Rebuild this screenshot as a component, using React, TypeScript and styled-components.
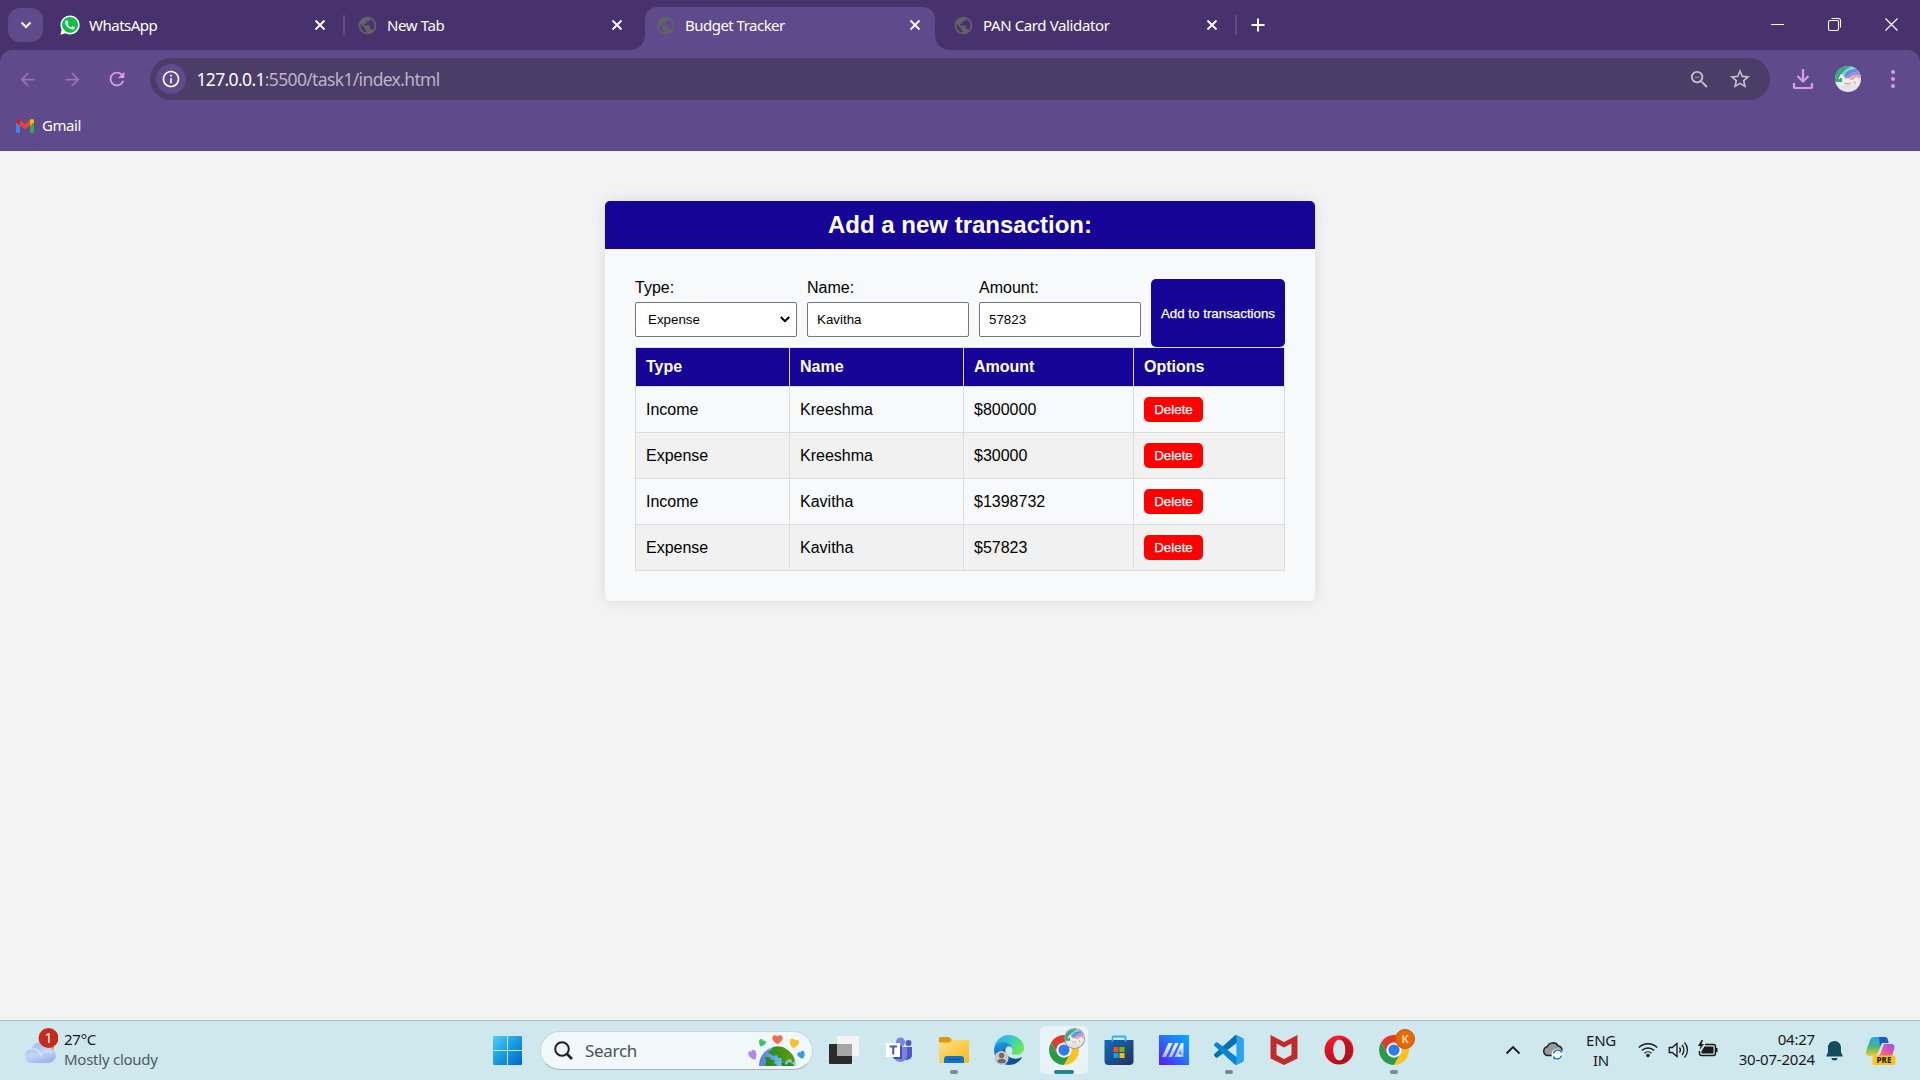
import React from "react";
import styled, { createGlobalStyle } from "styled-components";
import {
  MdPublic,
  MdArrowBack,
  MdArrowForward,
  MdRefresh,
  MdInfoOutline,
  MdZoomOut,
  MdStarOutline,
} from "react-icons/md";
import { FaWhatsapp } from "react-icons/fa";

const UI = '"Noto Sans", "Open Sans", sans-serif';
const ARIAL = '"Liberation Sans", Arial, sans-serif';
const NAVY = "#150496";
const CHROME = "#5f4a8b";
const STRIP = "#47326e";
const PINK = "#d99be8";

const GlobalStyle = createGlobalStyle`
  * { box-sizing: border-box; }
  html, body { margin: 0; padding: 0; overflow: hidden; }
  svg { display: block; flex: none; }
`;

const Screen = styled.div`
  width: 1920px;
  height: 1080px;
  display: flex;
  flex-direction: column;
  overflow: hidden;
  background: #f3f3f3;
  font-family: ${UI};
`;

/* ---------- Browser frame ---------- */

const TabStrip = styled.div`
  height: 50px;
  flex: none;
  display: flex;
  align-items: flex-start;
  background: ${STRIP};
  color: #fff;
`;

const TabSearch = styled.div`
  width: 35px;
  height: 34px;
  margin: 8px 6px 0 8px;
  border-radius: 12px;
  background: ${CHROME};
  display: flex;
  align-items: center;
  justify-content: center;
`;

const Tab = styled.div<{ $active?: boolean; $width: number; $start: number; $end: number }>`
  position: relative;
  width: ${(p) => p.$width}px;
  height: 43px;
  margin-top: 7px;
  padding: 0 ${(p) => p.$end}px 7px ${(p) => p.$start}px;
  display: flex;
  align-items: center;
  border-radius: 12px 12px 0 0;
  background: ${(p) => (p.$active ? CHROME : "transparent")};

  &::before,
  &::after {
    content: "";
    display: ${(p) => (p.$active ? "block" : "none")};
    position: absolute;
    bottom: 0;
    width: 14px;
    height: 14px;
  }
  &::before {
    left: -14px;
    background: radial-gradient(circle at 0 0, transparent 13.5px, ${CHROME} 14px);
  }
  &::after {
    right: -14px;
    background: radial-gradient(circle at 100% 0, transparent 13.5px, ${CHROME} 14px);
  }
`;

const TabTitle = styled.span<{ $track: number }>`
  flex: 1;
  margin-left: 9px;
  font-size: 15px;
  line-height: 20px;
  letter-spacing: ${(p) => p.$track}px;
  white-space: nowrap;
`;

const TabDivider = styled.div`
  width: 2px;
  height: 20px;
  margin-top: 15px;
  background: ${CHROME};
`;

const NewTabButton = styled.div`
  margin: 18px 0 0 14px;
`;

const WindowButtons = styled.div`
  margin-left: auto;
  padding: 17px 21px 0 0;
  display: flex;
  gap: 42px;
`;

const ToolbarBack = styled.div`
  flex: none;
  background: ${STRIP};
`;

const Toolbar = styled.div`
  height: 58px;
  padding: 8px 16px 8px 17px;
  display: flex;
  align-items: flex-start;
  border-radius: 12px 12px 0 0;
  background: ${CHROME};
`;

const NavIcons = styled.div`
  width: 133px;
  height: 42px;
  display: flex;
  align-items: center;
  gap: 23.5px;
  color: #9a70b8;
`;

const Omnibox = styled.div`
  width: 1620px;
  height: 42px;
  padding: 0 18px 0 6px;
  display: flex;
  align-items: center;
  border-radius: 21px;
  background: #4b3d68;
  color: #c5bfca;
`;

const SiteInfo = styled.div`
  width: 30px;
  height: 30px;
  border-radius: 50%;
  background: ${CHROME};
  color: #fff;
  display: flex;
  align-items: center;
  justify-content: center;
`;

const Url = styled.span`
  flex: 1;
  margin-left: 10.5px;
  font-size: 17.5px;
  line-height: 24px;
  letter-spacing: -0.65px;
  color: #bbb4c6;
  b {
    font-weight: 400;
    color: #fff;
  }
`;

const OmniActions = styled.div`
  display: flex;
  align-items: center;
  gap: 17px;
`;

const ToolbarActions = styled.div`
  height: 42px;
  margin-left: auto;
  display: flex;
  align-items: center;
  gap: 21px;
`;

const Bookmarks = styled.div`
  height: 43px;
  flex: none;
  padding: 7px 16px 0;
  display: flex;
  align-items: flex-start;
  gap: 8px;
  background: ${CHROME};
  color: #fff;
  font-size: 15px;
  line-height: 20px;
  letter-spacing: -0.45px;
  svg { margin-top: 4px; }
`;

/* ---------- Page ---------- */

const Page = styled.main`
  flex: 1;
  padding-top: 50px;
  display: flex;
  align-items: flex-start;
  justify-content: center;
  background: #f3f3f3;
  font-family: ${ARIAL};
  color: #000;
`;

const Card = styled.section`
  width: 710px;
  height: 400px;
  border-radius: 5px;
  overflow: hidden;
  background: #f8f9fb;
  box-shadow: 0 0 15px rgba(0, 0, 0, 0.1);
`;

const CardTitle = styled.h1`
  height: 48px;
  margin: 0;
  text-align: center;
  font-size: 24px;
  line-height: 48px;
  font-weight: 700;
  background: ${NAVY};
  color: #fff;
`;

const CardBody = styled.div`
  padding: 30px;
`;

const Form = styled.div`
  height: 68px;
  display: flex;
  align-items: flex-start;
  gap: 10px;
`;

const Field = styled.label`
  width: 162px;
  display: flex;
  flex-direction: column;
  gap: 5px;
  font-size: 16px;
  line-height: 18px;
`;

const Input = styled.input`
  width: 162px;
  height: 35px;
  padding: 0 9px;
  border: 1px solid #767676;
  border-radius: 2px;
  background: #fff;
  color: #000;
  font: 13.333px ${ARIAL};
`;

const SelectBox = styled.div`
  position: relative;
  svg {
    position: absolute;
    right: 7px;
    top: 13px;
    pointer-events: none;
  }
`;

const Select = styled.select`
  display: block;
  appearance: none;
  width: 162px;
  height: 35px;
  padding: 0 11px 0 12px;
  border: 1px solid #767676;
  border-radius: 2px;
  background: #fff;
  color: #000;
  font: 13.333px ${ARIAL};
`;

const AddButton = styled.button`
  width: 134px;
  height: 68px;
  padding: 0;
  border: 0;
  border-radius: 5px;
  background: ${NAVY};
  color: #fff;
  font: 13.333px ${ARIAL};
  -webkit-text-stroke: 0.25px #fff;
  white-space: nowrap;
`;

const Table = styled.div`
  width: 650px;
  display: grid;
  grid-template-columns: 154px 174px 170px 151px;
  border: solid #ddd;
  border-width: 1px 0 0 1px;
`;

const Cell = styled.div<{ $head?: boolean; $shade?: boolean }>`
  height: ${(p) => (p.$head ? 39 : 46)}px;
  padding: 0 10px;
  display: flex;
  align-items: center;
  border: solid #ddd;
  border-width: 0 1px 1px 0;
  background: ${(p) => (p.$head ? NAVY : p.$shade ? "#f1f1f1" : "transparent")};
  color: ${(p) => (p.$head ? "#fff" : "#000")};
  font-size: 16px;
  font-weight: ${(p) => (p.$head ? 700 : 400)};
`;

const DeleteButton = styled.button`
  width: 59px;
  height: 25px;
  padding: 0;
  border: 0;
  border-radius: 5px;
  background: #f00;
  color: #fff;
  font: 13.333px ${ARIAL};
  -webkit-text-stroke: 0.25px #fff;
`;

/* ---------- Taskbar ---------- */

const Taskbar = styled.footer`
  height: 60px;
  flex: none;
  display: flex;
  border-top: 1px solid #a9b6bf;
  background: #cfe8ee;
  color: #1a1a1a;
  font-size: 15px;
  line-height: 20px;
`;

const Weather = styled.div`
  width: 493px;
  padding: 6px 0 0 24px;
  display: flex;
  gap: 6px;
`;

const WeatherText = styled.div`
  padding-top: 2px;
  display: flex;
  flex-direction: column;
  letter-spacing: -0.25px;
  span:last-child { color: #4d5c60; }
`;

const StartButton = styled.div`
  width: 47px;
  padding-top: 15px;
`;

const SearchPill = styled.div`
  width: 273px;
  height: 39px;
  margin-top: 10px;
  padding: 0 6px 0 13px;
  display: flex;
  align-items: center;
  border-radius: 20px;
  border: 1px solid #c3d8df;
  border-bottom-color: #a5b4bc;
  background: #f0f8fa;
  color: #4b5254;
  font-size: 17px;
  letter-spacing: -0.3px;
  span {
    flex: 1;
    margin-left: 12px;
  }
`;

const Apps = styled.div`
  margin-left: 3.5px;
  display: flex;
`;

const AppSlot = styled.div<{ $active?: boolean; $running?: boolean }>`
  position: relative;
  width: 48px;
  height: 48px;
  margin: 5px 3.5px 0;
  display: flex;
  align-items: center;
  justify-content: center;
  border-radius: 5px;
  background: ${(p) => (p.$active ? "#e7f3f7" : "transparent")};
  &::after {
    content: "";
    display: ${(p) => (p.$active || p.$running ? "block" : "none")};
    position: absolute;
    bottom: 0;
    width: ${(p) => (p.$active ? 20 : 8)}px;
    height: 4px;
    border-radius: 2px;
    background: ${(p) => (p.$active ? "#268392" : "#7b8a8e")};
  }
`;

const Badge = styled.div`
  position: absolute;
  top: 3px;
  left: 25px;
  width: 20px;
  height: 20px;
  border-radius: 50%;
  display: flex;
  align-items: center;
  justify-content: center;
  border: 1px solid #b35a18;
  background: #e96900;
  color: #fbe3cc;
  font-size: 11px;
  font-weight: 600;
`;

const AvatarBadge = styled.div`
  position: absolute;
  top: 3px;
  left: 25px;
  border-radius: 50%;
  box-shadow: 0 0 0 1px #8f9a9e;
`;

const Tray = styled.div`
  width: 421px;
  margin-left: auto;
  display: flex;
  align-items: flex-start;
`;

const TrayItem = styled.div<{ $width: number; $top: number }>`
  width: ${(p) => p.$width}px;
  padding-top: ${(p) => p.$top}px;
  flex: none;
`;

const TrayText = styled(TrayItem)<{ $align: "center" | "right"; $track?: number }>`
  display: flex;
  flex-direction: column;
  text-align: ${(p) => p.$align};
  letter-spacing: ${(p) => p.$track ?? 0}px;
  white-space: nowrap;
`;

/* ---------- Drawings ---------- */

const CloseX = () => (
  <svg width="14" height="14" viewBox="0 0 14 14" fill="none" stroke="#fff" strokeWidth="1.8">
    <path d="M2.5 2.5l9 9M11.5 2.5l-9 9" />
  </svg>
);

const WhatsAppLogo = () => (
  <svg width="20" height="20" viewBox="0 0 20 20">
    <circle cx="10.2" cy="9.8" r="8.8" fill="#0cc143" />
    <path d="M1 19l1.6-6 4 4.4z" fill="#fff" />
    <FaWhatsapp x={-1} y={-1} size={22} color="#fff" />
  </svg>
);

const Avatar = ({ size }: { size: number }) => (
  <svg width={size} height={size} viewBox="0 0 26 26">
    <defs>
      <clipPath id={`round${size}`}>
        <circle cx="13" cy="13" r="13" />
      </clipPath>
    </defs>
    <g clipPath={`url(#round${size})`}>
      <rect width="26" height="26" fill="#e4e3e6" />
      <path d="M0 0h16v5L7 9l-1 7H0z" fill="#36a880" />
      <g fill="none" strokeWidth="3.2">
        <path d="M7 16C6 7 12 3 21 1" stroke="#80d4d8" />
        <path d="M10 13C11 6 17 4 25 4" stroke="#5b8de0" />
        <path d="M13 12c1-4 6-5 14-4" stroke="#a58ae2" />
        <path d="M16 14c2-4 5-4 12-3" stroke="#e7a8b6" />
      </g>
      <path d="M6 8l3 1 2 3 3 2h5l2-3 2 1 1 6-2 2-2-3-2 2-6-1-5 2-3-1 2-3-1-3-2 0z" fill="#f4eee6" />
      <path d="M9 17l4 1 3-1M8 9l3 4M19 15l2 3" stroke="#b6a08e" fill="none" />
      <path d="M6 16v-4" stroke="#36a880" strokeWidth="2" />
    </g>
  </svg>
);

const GmailLogo = () => (
  <svg width="18" height="14" viewBox="0 0 18 14">
    <path d="M0 2v10.8A1.2 1.2 0 001.2 14H4V5.5z" fill="#4285f4" />
    <path d="M18 2v10.8a1.2 1.2 0 01-1.2 1.2H14V5.5z" fill="#34a853" />
    <path d="M14 1.2V6.5l4-3V2C18 .2 16-.7 14.500 .6z" fill="#fbbc04" />
    <path d="M4 6.500V1.200l5 3.800 5-3.800v5.300L9 10.300z" fill="#ea4335" />
    <path d="M0 2v1.500l4 3V1.200L3.500.6C2-.7 0 .2 0 2z" fill="#c5221f" />
  </svg>
);

const ChromeLogo = () => (
  <svg width="30" height="30" viewBox="0 0 48 48">
    <path d="M24 12h20.780A24 24 0 0 0 3.220 12L13.600 30A12 12 0 0 1 24 12z" fill="#e23b2e" />
    <path d="M13.600 30L3.220 12A24 24 0 0 0 24 48L34.400 30A12 12 0 0 1 13.600 30z" fill="#2a9a48" />
    <path d="M34.400 30L24 48A24 24 0 0 0 44.780 12H24A12 12 0 0 1 34.400 30z" fill="#fcc31e" />
    <circle cx="24" cy="24" r="11.800" fill="#fff" />
    <circle cx="24" cy="24" r="9" fill="#2f7bea" />
  </svg>
);

const WeatherIcon = () => (
  <svg width="34" height="38" viewBox="0 0 34 38">
    <defs>
      <linearGradient id="cloud" x1="0" y1="0" x2="0.5" y2="1">
        <stop offset="0" stopColor="#8fb2ee" />
        <stop offset="0.6" stopColor="#c4d6f8" />
        <stop offset="1" stopColor="#a0b8ee" />
      </linearGradient>
    </defs>
    <circle cx="26" cy="20" r="4" fill="#f08a1c" />
    <path
      d="M8 36a7 7 0 01-.5-14A9.500 9.500 0 0125 20.500 7.800 7.800 0 0125 36z"
      fill="url(#cloud)"
    />
    <path d="M6 22.500c6-2 10 2 10.500 6 2-4 7-5 11-3" stroke="#dce8fc" strokeWidth="1.200" fill="none" />
    <circle cx="24.500" cy="11" r="10" fill="#c42b1c" />
    <text x="24.500" y="16" textAnchor="middle" fontFamily={UI} fontSize="14" fill="#fff">
      1
    </text>
  </svg>
);

const StartLogo = () => (
  <svg width="29" height="29" viewBox="0 0 29 29">
    <defs>
      <linearGradient id="win" x1="0" y1="0" x2="1" y2="1">
        <stop offset="0" stopColor="#4fd0fb" />
        <stop offset="0.5" stopColor="#189ae4" />
        <stop offset="1" stopColor="#0067c8" />
      </linearGradient>
    </defs>
    <path
      d="M1 0h13v14H0V1a1 1 0 011-1zM15 0h13a1 1 0 011 1v13H15zM0 15h14v14H1a1 1 0 01-1-1zM15 15h14v13a1 1 0 01-1 1H15z"
      fill="url(#win)"
    />
  </svg>
);

const Earth = () => (
  <svg width="58" height="32" viewBox="0 0 58 32">
    <defs>
      <linearGradient id="sea" x1="0" x2="1">
        <stop offset="0" stopColor="#5b78dc" />
        <stop offset="0.5" stopColor="#66b4f4" />
        <stop offset="1" stopColor="#8fd0ff" />
      </linearGradient>
      <linearGradient id="land" x1="0" x2="1">
        <stop offset="0" stopColor="#1f8a1c" />
        <stop offset="1" stopColor="#669c06" />
      </linearGradient>
      <path id="heart" d="M0 5C-6 1-5.500-4-2.500-4.500-1-4.700 0-3.500 0-3c0-.5 1-1.700 2.500-1.500C5.500-4 6 1 0 5z" />
    </defs>
    <path d="M11 31a18.500 19.500 0 0137 0z" fill="url(#sea)" />
    <path
      d="M24 13c4-2 10-2 14 1 5 3 8 7 9 12l-3 2-1-4-4 1-2 3-4-2 1-3-4 0-1-3-4 1-3-3-2 1 1-3 3-1zM17 22l4 0 3 3 3 0-1 3 4 3H17l1-4z"
      fill="url(#land)"
    />
    <path d="M33 28l3-1 2 3 3-3 4 2 1 2H34z" fill="#2f8a14" />
    <use href="#heart" transform="translate(5 20) rotate(-25) scale(.85 1.05)" fill="#b785e4" />
    <use href="#heart" transform="translate(14 8) rotate(25) scale(.75)" fill="#3fc463" />
    <use href="#heart" transform="translate(29.500 4.500) scale(1.100 .95)" fill="#f46a52" />
    <use href="#heart" transform="translate(46 8.500) rotate(15) scale(1 .95)" fill="#fbbf2f" />
    <use href="#heart" transform="translate(53.500 20) rotate(-25) scale(.8)" fill="#329fe4" />
  </svg>
);

const TaskView = () => (
  <svg width="30" height="30" viewBox="0 0 30 30">
    <rect x="0" y="9" width="23" height="20" rx="1" fill="#2b2b2b" />
    <rect x="8" y="1" width="22" height="20" rx="1" fill="#f3f3f3" />
    <rect x="8" y="9" width="15" height="12" fill="#a5a5a5" />
  </svg>
);

const TeamsLogo = () => (
  <svg width="28" height="26" viewBox="0 0 28 26">
    <circle cx="15.500" cy="5" r="4.500" fill="#7b83eb" />
    <circle cx="23.500" cy="6" r="3" fill="#5059c9" />
    <path d="M19 10h8v8a5 5 0 01-5 5h-3z" fill="#5059c9" />
    <path d="M8 10h14v8c0 4-3 7-6.500 7S9 22 8 19z" fill="#7b83eb" />
    <path d="M8 20h7V9h2v13H9z" fill="#4a4fa8" />
    <rect x="1" y="6" width="14" height="14" fill="#fff" />
    <path d="M4.500 9.500h7.500M8.200 9.500v8" stroke="#4b53bc" strokeWidth="2" fill="none" />
  </svg>
);

const FolderLogo = () => (
  <svg width="30" height="30" viewBox="0 0 30 30">
    <defs>
      <linearGradient id="fold" x1="0" y1="0" x2="1" y2="1">
        <stop offset="0" stopColor="#ffe08a" />
        <stop offset="1" stopColor="#fbb918" />
      </linearGradient>
    </defs>
    <path d="M0 3.500A1.500 1.500 0 011.500 2H10l3 3h15v5H0z" fill="#dc9a05" />
    <path d="M0 7.500h10L13 5h15.500A1.500 1.500 0 0130 6.500V28H0z" fill="url(#fold)" />
    <path d="M5 28v-4a3 3 0 013-3h14a3 3 0 013 3v4z" fill="#1372c8" />
    <path d="M9 24.500h12" stroke="#0b4c91" />
  </svg>
);

const EdgeLogo = () => (
  <svg width="30" height="30" viewBox="0 0 256 256">
    <defs>
      <linearGradient id="e1" x1="0" x2="1">
        <stop offset="0" stopColor="#0c59a4" />
        <stop offset="1" stopColor="#114a8b" />
      </linearGradient>
      <linearGradient id="e2" x1="0" y1="0" x2="0" y2="1">
        <stop offset="0" stopColor="#1b9de2" />
        <stop offset="1" stopColor="#0c5aa8" />
      </linearGradient>
      <linearGradient id="e3" x1="0" x2="1" y2="0.5">
        <stop offset="0" stopColor="#2fb0e4" />
        <stop offset="0.500" stopColor="#33c5d0" />
        <stop offset="1" stopColor="#66eb56" />
      </linearGradient>
    </defs>
    <path
      d="M231 190.500c-3.400 1.800-6.900 3.400-10.500 4.700a101.500 101.500 0 0 1-35.900 6.400c-47.300 0-88.500-32.500-88.500-74.300a31.500 31.500 0 0 1 16.400-27.300c-42.800 1.800-53.800 46.400-53.800 72.500 0 74 68.100 81.400 82.800 81.400 7.900 0 19.800-2.300 27-4.600l1.300-.4a128.300 128.300 0 0 0 66.600-52.800 4 4 0 0 0-5.400-5.600z"
      fill="url(#e1)"
    />
    <path
      d="M105.700 241.400A79.200 79.200 0 0 1 83 220.100a80.700 80.700 0 0 1 29.500-120c3.200-1.500 8.500-4.100 15.600-4a32.400 32.400 0 0 1 25.700 13 31.900 31.900 0 0 1 6.300 18.700c0-.2 24.500-79.600-80-79.600-43.900 0-80 41.600-80 78.200a130.200 130.200 0 0 0 12.100 56 128 128 0 0 0 156.400 67 75.500 75.500 0 0 1-62.800-8z"
      fill="url(#e2)"
    />
    <path
      d="M152.300 148.900c-.9 1-3.400 2.500-3.400 5.600 0 2.600 1.700 5.200 4.800 7.300 14.300 10 41.400 8.600 41.500 8.600a59.600 59.600 0 0 0 30.300-8.300 61.400 61.400 0 0 0 30.400-52.900c.3-22.400-8-37.300-11.300-43.900C223.500 23.900 177.700 0 128 0A128 128 0 0 0 0 126.200c.5-36.500 36.800-66 80-66 3.500 0 23.500.3 42 10a72.600 72.600 0 0 1 30.900 29.300c6.100 10.600 7.200 24.100 7.200 29.500s-2.700 13.300-7.800 19.900z"
      fill="url(#e3)"
    />
    <circle cx="65" cy="196" r="60" fill="#c9c7c5" />
    <circle cx="65" cy="175" r="23" fill="#6d6a68" />
    <path d="M27 228c0-34 76-34 76 0-18 18-58 18-76 0z" fill="#6d6a68" />
  </svg>
);

const StoreLogo = () => (
  <svg width="30" height="30" viewBox="0 0 30 30">
    <defs>
      <linearGradient id="bag" x1="0" y1="0" x2="1" y2="1">
        <stop offset="0" stopColor="#0f6cbd" />
        <stop offset="1" stopColor="#26315e" />
      </linearGradient>
    </defs>
    <path d="M.5 5h29v21a4 4 0 01-4 4h-21a4 4 0 01-4-4z" fill="url(#bag)" />
    <path d="M8.500 6.500V2.500A1 1 0 019.500 1.500h11a1 1 0 011 1V6.500" stroke="#22b8ef" strokeWidth="1.800" fill="none" />
    <path d="M9.500 12h5v5h-5z" fill="#f25022" />
    <path d="M15.500 12h5v5h-5z" fill="#7fba00" />
    <path d="M9.500 18h5v5h-5z" fill="#00a4ef" />
    <path d="M15.500 18h5v5h-5z" fill="#ffb900" />
  </svg>
);

const AsusLogo = () => (
  <svg width="30" height="30" viewBox="0 0 30 30">
    <defs>
      <linearGradient id="asus" x1="0" y1="1" x2="1" y2="0">
        <stop offset="0" stopColor="#5a17ff" />
        <stop offset="0.500" stopColor="#2b6cff" />
        <stop offset="1" stopColor="#00b0ff" />
      </linearGradient>
      <linearGradient id="slash" x1="0" y1="0" x2="0" y2="1">
        <stop offset="0" stopColor="#fff" />
        <stop offset="1" stopColor="#a9b4ff" />
      </linearGradient>
    </defs>
    <rect width="30" height="30" fill="url(#asus)" />
    <path d="M3 22L9.500 8h4L7 22z" fill="url(#slash)" />
    <path d="M9.500 22L16 8h3.500L13 22z" fill="url(#slash)" />
    <path d="M15.500 22L22 8h2.500v10h-3v-4L19 22z" fill="url(#slash)" />
    <circle cx="20.500" cy="20.500" r="1.500" fill="#fff" />
    <path d="M22 18h2.500v4H22z" fill="#9fb8ff" />
  </svg>
);

const VSCodeLogo = () => (
  <svg width="30" height="30" viewBox="0 0 256 254">
    <path
      d="M246.135 26.873L193.429 1.497a15.938 15.938 0 0 0-18.182 3.094L2.665 161.950a10.655 10.655 0 0 0 .007 15.758l14.094 12.812a10.655 10.655 0 0 0 13.607.605L238.203 33.463c6.972-5.290 16.987-.317 16.987 8.434v-.612a15.985 15.985 0 0 0-9.055-14.412z"
      fill="#0070b5"
    />
    <path
      d="M246.135 226.816l-52.706 25.376a15.933 15.933 0 0 1-18.182-3.094L2.665 91.740a10.655 10.655 0 0 1 .007-15.757l14.094-12.813a10.655 10.655 0 0 1 13.607-.605l207.830 157.662c6.972 5.290 16.987.317 16.987-8.434v.612a15.985 15.985 0 0 1-9.055 14.411z"
      fill="#0a84d0"
    />
    <path
      d="M193.428 252.193a15.945 15.945 0 0 1-18.184-3.095c5.900 5.900 15.988 1.722 15.988-6.621V11.213c0-8.343-10.088-12.522-15.988-6.621a15.943 15.943 0 0 1 18.184-3.095l52.698 25.343a15.985 15.985 0 0 1 9.060 14.406v171.200a15.985 15.985 0 0 1-9.060 14.404z"
      fill="#2ba4ee"
    />
  </svg>
);

const McAfeeLogo = () => (
  <svg width="28" height="30" viewBox="0 0 28 30">
    <path
      d="M.5 0L14 7 27.500 0v23.500L14 30 .5 23.500zM6.500 8.500v11.500L14 24l7.500-4V8.500L14 12.500z"
      fill="#c22a2c"
      fillRule="evenodd"
    />
  </svg>
);

const OperaLogo = () => (
  <svg width="30" height="30" viewBox="0 0 30 30">
    <defs>
      <linearGradient id="op" x1="0" y1="0" x2="0" y2="1">
        <stop offset="0" stopColor="#ff1b2d" />
        <stop offset="1" stopColor="#b80d1c" />
      </linearGradient>
    </defs>
    <path
      d="M15 .5a14.500 14.500 0 100 29 14.500 14.500 0 000-29zm.500 4c3.500 0 5.800 4.500 5.800 10.500s-2.300 10.500-5.800 10.500S9.200 21 9.200 15 12 4.500 15.500 4.500z"
      fill="url(#op)"
      fillRule="evenodd"
    />
    <path
      d="M14 4.800c4-2.500 8-1.600 10.500 1 5 5 5 13.500 0 18.500-2.500 2.600-6.500 3.500-10.500.9 4 1.300 7.500-3.200 7.500-10.200S18 3.500 14 4.800z"
      fill="#9d1218"
      opacity="0.550"
    />
  </svg>
);

const CopilotLogo = () => (
  <svg width="30" height="30" viewBox="0 0 30 30">
    <defs>
      <linearGradient id="cp1" x1="0" y1="0" x2="0" y2="1">
        <stop offset="0" stopColor="#22a7f2" />
        <stop offset="0.500" stopColor="#45b97a" />
        <stop offset="1" stopColor="#f5c92c" />
      </linearGradient>
      <linearGradient id="cp2" x1="1" y1="0" x2="0" y2="1">
        <stop offset="0" stopColor="#a24fe0" />
        <stop offset="0.600" stopColor="#ec5a9c" />
        <stop offset="1" stopColor="#f98357" />
      </linearGradient>
    </defs>
    <path d="M8 1h11c2 0 3 2 3.500 6H16l-4 10c-1 2-2 3-5 3H3c-3 0-3.500-3-2.500-6L4 4c.7-2 2-3 4-3z" fill="url(#cp1)" />
    <path d="M13 1h6c2 0 3 2 3.500 6H16l-2 3z" fill="#1b57cf" />
    <path d="M18 8h7c3 0 4 2 3.200 5L26 20H10c3 0 4-1 5-4z" fill="url(#cp2)" />
    <rect x="6.500" y="19.500" width="23" height="9.500" rx="2" fill="#fdc60b" />
    <text x="18" y="27.200" textAnchor="middle" fontFamily={UI} fontSize="8" fontWeight="800" fill="#1a1a1a">
      PRE
    </text>
  </svg>
);

const rows = [
  { type: "Income", name: "Kreeshma", amount: "$800000" },
  { type: "Expense", name: "Kreeshma", amount: "$30000" },
  { type: "Income", name: "Kavitha", amount: "$1398732" },
  { type: "Expense", name: "Kavitha", amount: "$57823" },
];

export default function App() {
  return (
    <Screen>
      <GlobalStyle />
      <TabStrip>
        <TabSearch>
          <svg width="12" height="12" viewBox="0 0 12 12" fill="none" stroke="#fff" strokeWidth="2">
            <path d="M1.500 3.500L6 8l4.500-4.500" />
          </svg>
        </TabSearch>
        <Tab $width={294} $start={11} $end={16}>
          <WhatsAppLogo />
          <TabTitle $track={-0.5}>WhatsApp</TabTitle>
          <CloseX />
        </Tab>
        <TabDivider />
        <Tab $width={300} $start={12} $end={21}>
          <MdPublic size={21} color="#5f6368" />
          <TabTitle $track={-0.4}>New Tab</TabTitle>
          <CloseX />
        </Tab>
        <Tab $width={290} $start={10} $end={13} $active>
          <MdPublic size={21} color="#5f6368" />
          <TabTitle $track={-0.52}>Budget Tracker</TabTitle>
          <CloseX />
        </Tab>
        <Tab $width={300} $start={18} $end={16}>
          <MdPublic size={21} color="#5f6368" />
          <TabTitle $track={-0.38}>PAN Card Validator</TabTitle>
          <CloseX />
        </Tab>
        <TabDivider />
        <NewTabButton>
          <svg width="14" height="14" viewBox="0 0 14 14" stroke="#fff" strokeWidth="2">
            <path d="M7 .5v13M.5 7h13" />
          </svg>
        </NewTabButton>
        <WindowButtons>
          <svg width="15" height="15" viewBox="0 0 15 15" stroke="#fff" strokeWidth="1">
            <path d="M1 7.500h13" />
          </svg>
          <svg width="15" height="15" viewBox="0 0 15 15" stroke="#fff" strokeWidth="1.100" fill="none">
            <rect x="1.500" y="3.500" width="10" height="10" rx="1.500" />
            <path d="M4.500 1.500h7a2 2 0 012 2v7" />
          </svg>
          <svg width="15" height="15" viewBox="0 0 15 15" stroke="#fff" strokeWidth="1.200">
            <path d="M1.500 1.500l12 12M13.500 1.500l-12 12" />
          </svg>
        </WindowButtons>
      </TabStrip>

      <ToolbarBack>
        <Toolbar>
          <NavIcons>
            <MdArrowBack size={21} />
            <MdArrowForward size={21} />
            <MdRefresh size={22} color={PINK} />
          </NavIcons>
          <Omnibox>
            <SiteInfo>
              <MdInfoOutline size={20} />
            </SiteInfo>
            <Url>
              <b>127.0.0.1</b>:5500/task1/index.html
            </Url>
            <OmniActions>
              <MdZoomOut size={23} />
              <MdStarOutline size={24} />
            </OmniActions>
          </Omnibox>
          <ToolbarActions>
            <svg width="22" height="22" viewBox="0 0 22 22" fill="none" stroke={PINK} strokeWidth="2.200">
              <path d="M11 1v12M5.500 8L11 13.500 16.500 8M2 15v3.500A1.500 1.500 0 003.500 20h15a1.500 1.500 0 001.500-1.500V15" />
            </svg>
            <Avatar size={26} />
            <svg width="22" height="22" viewBox="0 0 22 22" fill={PINK}>
              <circle cx="11" cy="4" r="2" />
              <circle cx="11" cy="11" r="2" />
              <circle cx="11" cy="18" r="2" />
            </svg>
          </ToolbarActions>
        </Toolbar>
      </ToolbarBack>
      <Bookmarks>
        <GmailLogo />
        <span>Gmail</span>
      </Bookmarks>

      <Page>
        <Card>
          <CardTitle>Add a new transaction:</CardTitle>
          <CardBody>
            <Form>
              <Field>
                Type:
                <SelectBox>
                  <Select defaultValue="Expense">
                    <option>Income</option>
                    <option>Expense</option>
                  </Select>
                  <svg width="10" height="9" viewBox="0 0 10 9" fill="none" stroke="#000" strokeWidth="2">
                    <path d="M.8 2L5 6.200 9.200 2" />
                  </svg>
                </SelectBox>
              </Field>
              <Field>
                Name:
                <Input defaultValue="Kavitha" />
              </Field>
              <Field>
                Amount:
                <Input defaultValue="57823" />
              </Field>
              <AddButton>Add to transactions</AddButton>
            </Form>
            <Table>
              {["Type", "Name", "Amount", "Options"].map((h) => (
                <Cell key={h} $head>
                  {h}
                </Cell>
              ))}
              {rows.map((r, i) => (
                <React.Fragment key={i}>
                  <Cell $shade={i % 2 === 1}>{r.type}</Cell>
                  <Cell $shade={i % 2 === 1}>{r.name}</Cell>
                  <Cell $shade={i % 2 === 1}>{r.amount}</Cell>
                  <Cell $shade={i % 2 === 1}>
                    <DeleteButton>Delete</DeleteButton>
                  </Cell>
                </React.Fragment>
              ))}
            </Table>
          </CardBody>
        </Card>
      </Page>

      <Taskbar>
        <Weather>
          <WeatherIcon />
          <WeatherText>
            <span>27°C</span>
            <span>Mostly cloudy</span>
          </WeatherText>
        </Weather>
        <StartButton>
          <StartLogo />
        </StartButton>
        <SearchPill>
          <svg width="19" height="19" viewBox="0 0 19 19" fill="none" stroke="#222" strokeWidth="2">
            <circle cx="8" cy="8" r="6.800" />
            <path d="M13 13l5 5" strokeWidth="2.600" />
          </svg>
          <span>Search</span>
          <Earth />
        </SearchPill>
        <Apps>
          <AppSlot><TaskView /></AppSlot>
          <AppSlot><TeamsLogo /></AppSlot>
          <AppSlot $running><FolderLogo /></AppSlot>
          <AppSlot><EdgeLogo /></AppSlot>
          <AppSlot $active>
            <ChromeLogo />
            <AvatarBadge><Avatar size={19} /></AvatarBadge>
          </AppSlot>
          <AppSlot><StoreLogo /></AppSlot>
          <AppSlot><AsusLogo /></AppSlot>
          <AppSlot $running><VSCodeLogo /></AppSlot>
          <AppSlot><McAfeeLogo /></AppSlot>
          <AppSlot><OperaLogo /></AppSlot>
          <AppSlot $running>
            <ChromeLogo />
            <Badge>K</Badge>
          </AppSlot>
        </Apps>
        <Tray>
          <TrayItem $width={43} $top={21}>
            <svg width="28" height="16" viewBox="0 0 28 16" fill="none" stroke="#1a1a1a" strokeWidth="1.800">
              <path d="M7.500 11.500L14 5l6.500 6.500" />
            </svg>
          </TrayItem>
          <TrayItem $width={35} $top={20}>
            <svg width="22" height="20" viewBox="0 0 22 20">
              <path
                d="M5 14.500a4.500 4.500 0 01.2-8.700A6 6 0 0116 4.800a5 5 0 014 5.200v4.500z"
                fill="#9a9a9a"
                stroke="#222"
                strokeWidth="1.500"
              />
              <circle cx="15.500" cy="13.500" r="6" fill="#fff" />
              <path
                d="M11.500 12.500a4.200 4.200 0 017.500-1.800v-2M19.500 14.500a4.200 4.200 0 01-7.500 1.800v2"
                fill="none"
                stroke="#1674c4"
                strokeWidth="1.400"
              />
            </svg>
          </TrayItem>
          <TrayText $width={48} $top={9} $align="center" $track={-0.3}>
            <span>ENG</span>
            <span>IN</span>
          </TrayText>
          <TrayItem $width={32} $top={19}>
            <svg width="42" height="20" viewBox="-13 0 42 20" fill="none" stroke="#1a1a1a" strokeWidth="1.400">
              <path d="M.8 7.500a13 13 0 0118.400 0M3.800 10.500a8.800 8.800 0 0112.400 0M6.500 13.300a5 5 0 017 0" />
              <circle cx="10" cy="15.500" r="1.800" fill="#1a1a1a" stroke="none" />
            </svg>
          </TrayItem>
          <TrayItem $width={30} $top={19}>
            <svg width="42" height="20" viewBox="-11 0 42 20" fill="none" stroke="#1a1a1a" strokeWidth="1.300">
              <path d="M1.200 7.500v5h3L9 16.500v-13L4.200 7.500zM11.500 7.500a4 4 0 010 5M14 5a7.500 7.500 0 010 10M16.500 2.500a11 11 0 010 15" />
            </svg>
          </TrayItem>
          <TrayItem $width={46} $top={19}>
            <svg width="36" height="20" viewBox="-11 0 36 20">
              <path
                d="M7 4.500h8.500a2 2 0 012 2v7a2 2 0 01-2 2h-12a2 2 0 01-2-2V11"
                fill="none"
                stroke="#1a1a1a"
                strokeWidth="1.500"
              />
              <path d="M18 8h1.500v4H18zM6.500 6.500h9v7h-12V11z" fill="#1a1a1a" />
              <path d="M3.500 0L0 6h2.500L1.500 10 6 4H3.500L5 0z" fill="#1a1a1a" />
            </svg>
          </TrayItem>
          <TrayText $width={82} $top={8} $align="right" $track={-0.2}>
            <span>04:27</span>
            <span>30-07-2024</span>
          </TrayText>
          <TrayItem $width={51} $top={20}>
            <svg width="30" height="20" viewBox="-11 0 30 20" fill="#124d5c">
              <path d="M8.500 0C4.500 0 2 3 2 6.500V11L.5 14.500V15.500h16v-1L15 11V6.500C15 3 12.500 0 8.500 0zM5.500 17h6a3 2.500 0 01-6 0z" />
            </svg>
          </TrayItem>
          <TrayItem $width={30} $top={15}>
            <CopilotLogo />
          </TrayItem>
        </Tray>
      </Taskbar>
    </Screen>
  );
}
